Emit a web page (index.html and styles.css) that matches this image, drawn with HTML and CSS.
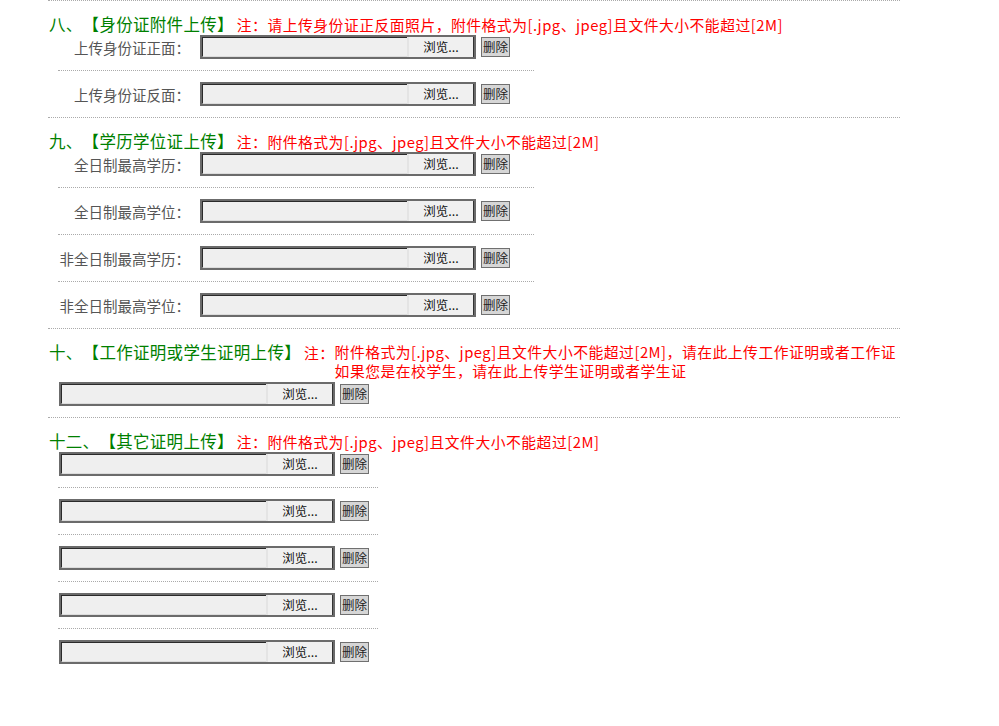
FILE: index.html
```html
<!DOCTYPE html>
<html lang="zh-CN">
<head>
  <meta charset="UTF-8">
  <title>附件上传</title>
  <link rel="stylesheet" href="styles.css">
</head>
<body>
  <div class="page">

    <div class="section">
      <div class="title">
        <span class="name">八、【身份证附件上传】</span><span class="note">注：请上传身份证正反面照片，附件格式为[.jpg、jpeg]且文件大小不能超过[2M]</span>
      </div>
      <div class="rows">
        <div class="row">
          <span class="label">上传身份证正面：</span>
          <div class="file"><span class="file-text"></span><span class="file-btn">浏览...</span></div>
          <button class="del">删除</button>
        </div>
        <div class="row">
          <span class="label">上传身份证反面：</span>
          <div class="file"><span class="file-text"></span><span class="file-btn">浏览...</span></div>
          <button class="del">删除</button>
        </div>
      </div>
    </div>

    <div class="section">
      <div class="title">
        <span class="name">九、【学历学位证上传】</span><span class="note">注：附件格式为[.jpg、jpeg]且文件大小不能超过[2M]</span>
      </div>
      <div class="rows">
        <div class="row">
          <span class="label">全日制最高学历：</span>
          <div class="file"><span class="file-text"></span><span class="file-btn">浏览...</span></div>
          <button class="del">删除</button>
        </div>
        <div class="row">
          <span class="label">全日制最高学位：</span>
          <div class="file"><span class="file-text"></span><span class="file-btn">浏览...</span></div>
          <button class="del">删除</button>
        </div>
        <div class="row">
          <span class="label">非全日制最高学历：</span>
          <div class="file"><span class="file-text"></span><span class="file-btn">浏览...</span></div>
          <button class="del">删除</button>
        </div>
        <div class="row">
          <span class="label">非全日制最高学位：</span>
          <div class="file"><span class="file-text"></span><span class="file-btn">浏览...</span></div>
          <button class="del">删除</button>
        </div>
      </div>
    </div>

    <div class="section">
      <div class="title title-tall">
        <span class="name">十、【工作证明或学生证明上传】</span><span class="note">注：</span><span class="note-lines">附件格式为[.jpg、jpeg]且文件大小不能超过[2M]，请在此上传工作证明或者工作证<br>如果您是在校学生，请在此上传学生证明或者学生证</span>
      </div>
      <div class="rows rows-plain">
        <div class="row">
          <div class="file"><span class="file-text"></span><span class="file-btn">浏览...</span></div>
          <button class="del">删除</button>
        </div>
      </div>
    </div>

    <div class="section">
      <div class="title">
        <span class="name">十二、【其它证明上传】</span><span class="note">注：附件格式为[.jpg、jpeg]且文件大小不能超过[2M]</span>
      </div>
      <div class="rows rows-plain">
        <div class="row">
          <div class="file"><span class="file-text"></span><span class="file-btn">浏览...</span></div>
          <button class="del">删除</button>
        </div>
        <div class="row">
          <div class="file"><span class="file-text"></span><span class="file-btn">浏览...</span></div>
          <button class="del">删除</button>
        </div>
        <div class="row">
          <div class="file"><span class="file-text"></span><span class="file-btn">浏览...</span></div>
          <button class="del">删除</button>
        </div>
        <div class="row">
          <div class="file"><span class="file-text"></span><span class="file-btn">浏览...</span></div>
          <button class="del">删除</button>
        </div>
        <div class="row">
          <div class="file"><span class="file-text"></span><span class="file-btn">浏览...</span></div>
          <button class="del">删除</button>
        </div>
      </div>
    </div>

  </div>
</body>
</html>
```

FILE: styles.css
```css
body {
  margin: 0;
  background: #fff;
  font-family: "Noto Sans CJK SC", "Noto Sans", sans-serif;
  text-spacing-trim: space-all;
}
.page {
  width: 852px;
  margin-left: 48px;
}
.section {
  border-top: 1px dotted #aaa;
  padding-top: 13px;
}
.title {
  height: 20px;
  font-size: 16.5px;
  line-height: 20px;
  padding-left: 1px;
  white-space: nowrap;
}
.title-tall {
  height: 39px;
}
.name {
  color: #008000;
  letter-spacing: 0.3px;
}
.note {
  color: #f00;
  font-size: 14.8px;
  line-height: 16px;
  letter-spacing: 0.5px;
  margin-left: 3px;
}
.note-lines {
  display: inline-block;
  vertical-align: top;
  color: #f00;
  font-size: 14.8px;
  line-height: 19px;
  letter-spacing: 0.5px;
}
.rows {
  width: 476px;
  margin-left: 10px;
}
.rows-plain {
  width: 320px;
}
.row {
  display: flex;
  align-items: center;
  height: 24px;
  padding: 11px 0;
  border-bottom: 1px dotted #aaa;
}
.row:first-child {
  padding-top: 1px;
}
.row:last-child {
  border-bottom: none;
}
.rows-plain .row {
  padding-left: 1px;
}
.label {
  width: 132px;
  padding-right: 10px;
  text-align: right;
  font-size: 14.5px;
  color: #555;
  white-space: nowrap;
}
.file {
  display: flex;
  width: 276px;
  height: 24px;
  box-sizing: border-box;
  border: 2px solid #6b6b6b;
  background: #efefef;
}
.file-text {
  flex: 1;
  border-left: 1px solid #2a2a2a;
  border-top: 1px solid #2a2a2a;
  border-bottom: 1px solid #dcdcdc;
}
.file-btn {
  width: 64px;
  border-left: 2px solid #e4e4e4;
  border-right: 1px solid #333;
  background: #f0f0f0;
  font-size: 12.5px;
  line-height: 20px;
  text-align: center;
  color: #111;
}
.del {
  margin-left: 5px;
  width: 29px;
  height: 20px;
  padding: 0;
  border: 1px solid #707070;
  background: #d6d6d6;
  font-family: "Noto Sans CJK SC", sans-serif;
  font-size: 12.5px;
  line-height: 18px;
  color: #222;
}
```
